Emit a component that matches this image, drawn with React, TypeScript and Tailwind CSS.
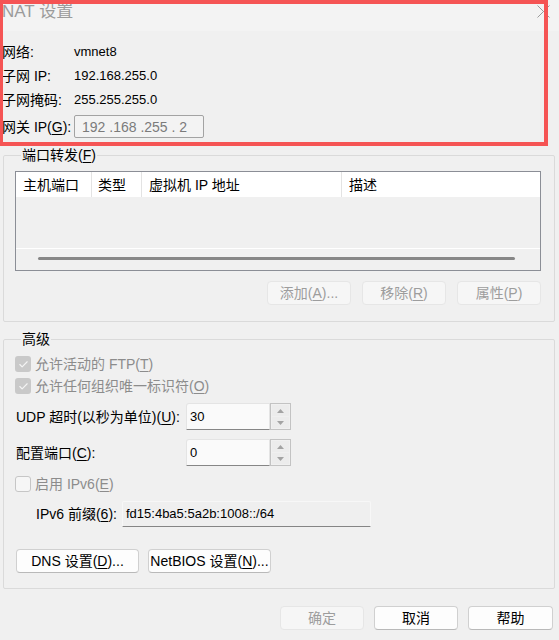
import { Check } from "lucide-react";

const font = "font-['Liberation_Sans','Noto_Sans_CJK_SC',sans-serif]";

function K({ c }: { c: string }) {
  return <span className="underline underline-offset-2">{c}</span>;
}

function CheckBox({ checked, children }: { checked?: boolean; children: React.ReactNode }) {
  return (
    <div className="flex h-4 items-center">
      {checked ? (
        <div className="flex h-4 w-4 items-center justify-center rounded-[3px] bg-[#c9c9c9]">
          <Check size={11} strokeWidth={2.5} color="#f4f4f4" />
        </div>
      ) : (
        <div className="h-4 w-4 rounded-[3px] border border-[#c6c6c6] bg-[#f6f6f6]" />
      )}
      <span className="ml-1 text-[14px] leading-4 text-[#8c8c8c]">{children}</span>
    </div>
  );
}

function Spin({ value }: { value: string }) {
  return (
    <div className="flex h-[27px]">
      <div className="flex w-[84px] items-center rounded-tl-[3px] border border-[#e4e4e4] border-b-[#868686] bg-[#fafafa] pl-[3px] text-[13px] leading-4">
        {value}
      </div>
      <div className="flex w-[21px] flex-col border border-[#c3c3c3] bg-[#f0f0f0]">
        <div className="m-px flex flex-1 items-center justify-center bg-[#ececec]">
          <svg width="7" height="4" viewBox="0 0 7 4">
            <path d="M0 4 L3.5 0 L7 4 Z" fill="#a3a3a3" />
          </svg>
        </div>
        <div className="mx-px mb-px flex flex-1 items-center justify-center bg-[#ececec]">
          <svg width="7" height="4" viewBox="0 0 7 4">
            <path d="M0 0 L3.5 4 L7 0 Z" fill="#a3a3a3" />
          </svg>
        </div>
      </div>
    </div>
  );
}

function Btn({
  children,
  disabled,
  w = "w-[84px]",
}: {
  children: React.ReactNode;
  disabled?: boolean;
  w?: string;
}) {
  return (
    <div
      className={`${w} flex h-[24px] items-center justify-center rounded-[4px] border text-[14px] leading-4 ${
        disabled
          ? "border-[#e6e6e6] bg-[#f6f6f6] text-[#9d9d9d]"
          : "border-[#d0d0d0] border-b-[#b9b9b9] bg-[#fdfdfd] text-black"
      }`}
    >
      {children}
    </div>
  );
}

function InfoRow({ label, value }: { label: React.ReactNode; value: string }) {
  return (
    <div className="flex h-6 items-center">
      <div className="w-[72px] text-[14px] leading-4">{label}</div>
      <div className="text-[13px] leading-4">{value}</div>
    </div>
  );
}

export default function App() {
  return (
    <div className={`${font} relative h-[640px] w-[559px] overflow-hidden bg-[#f0f0f0] text-black`}>
      {/* title bar */}
      <div className="flex h-[31px] items-start justify-between bg-[#f3f3f3]">
        <div className="pl-[2px] pt-[2px] text-[17px] leading-[20px] text-[#9b9b9b]">NAT 设置</div>
        <svg className="mr-[9px] mt-[5px]" width="13" height="13" viewBox="0 0 13 13">
          <path d="M0.5 0.5 L12.5 12.5 M12.5 0.5 L0.5 12.5" stroke="#9a9a9a" strokeWidth="1" />
        </svg>
      </div>

      {/* network info */}
      <div className="pl-[2px] pt-[9px]">
        <InfoRow label="网络:" value="vmnet8" />
        <InfoRow label="子网 IP:" value="192.168.255.0" />
        <InfoRow label="子网掩码:" value="255.255.255.0" />
        <div className="mt-[3px] flex h-[23px] items-center">
          <div className="w-[72px] text-[14px] leading-4">
            网关 IP(<K c="G" />):
          </div>
          <div className="flex h-[23px] w-[130px] items-center rounded-[2px] border border-[#a3a3a3] bg-[#f3f3f3] pl-[7px] text-[14px] leading-4 text-[#7b7b7b]">
            192 .168 .255 . 2
          </div>
        </div>
      </div>

      {/* port forwarding */}
      <fieldset className="ml-[3px] mt-[9px] w-[552px] rounded-[2px] border border-[#dadada] pb-[16px] pl-[11px] pr-[13px]">
        <legend className="ml-[6px] px-px text-[14px] leading-4">
          端口转发(<K c="F" />)
        </legend>
        <div className="mt-[8px] flex h-[100px] flex-col border border-[#8b8e96]">
          <div className="flex h-[25px] items-center bg-white text-[14px] leading-4">
            <div className="flex h-full w-[76px] items-center border-r border-[#e3e3e3] pl-[7px]">主机端口</div>
            <div className="flex h-full w-[50px] items-center border-r border-[#e3e3e3] pl-[6px]">类型</div>
            <div className="flex h-full w-[200px] items-center border-r border-[#e3e3e3] pl-[7px]">虚拟机 IP 地址</div>
            <div className="flex h-full flex-1 items-center pl-[7px]">描述</div>
          </div>
          <div className="h-[51px]" />
          <div className="h-px bg-white" />
          <div className="flex-1 pt-[8px]">
            <div className="ml-[22px] h-[3px] w-[477px] rounded-full bg-[#868686]" />
          </div>
        </div>
        <div className="mt-[10px] flex justify-end gap-[11px]">
          <Btn disabled>
            添加(<K c="A" />)...
          </Btn>
          <Btn disabled>
            移除(<K c="R" />)
          </Btn>
          <Btn disabled>
            属性(<K c="P" />)
          </Btn>
        </div>
      </fieldset>

      {/* advanced */}
      <fieldset className="ml-[3px] mt-[9px] w-[552px] rounded-[2px] border border-[#dadada] pb-[15px] pl-[11px]">
        <legend className="ml-[6px] px-px text-[14px] leading-4">高级</legend>
        <div className="mt-[9px]">
          <CheckBox checked>
            允许活动的 FTP(<K c="T" />)
          </CheckBox>
        </div>
        <div className="mt-[6px]">
          <CheckBox checked>
            允许任何组织唯一标识符(<K c="O" />)
          </CheckBox>
        </div>
        <div className="mt-[9px] flex items-center">
          <div className="w-[171px] pl-px text-[14px] leading-4">
            UDP 超时(以秒为单位)(<K c="U" />):
          </div>
          <Spin value="30" />
        </div>
        <div className="mt-[9px] flex items-center">
          <div className="w-[171px] pl-px text-[14px] leading-4">
            配置端口(<K c="C" />):
          </div>
          <Spin value="0" />
        </div>
        <div className="mt-[10px]">
          <CheckBox>
            启用 IPv6(<K c="E" />)
          </CheckBox>
        </div>
        <div className="mt-[9px] flex items-center">
          <div className="w-[107px] pl-[21px] text-[14px] leading-4">
            IPv6 前缀(<K c="6" />):
          </div>
          <div className="flex h-[26px] w-[249px] items-start rounded-t-[2px] border border-[#f7f7f7] border-b-[#858585] bg-[#efefef] pl-[3px] pt-[4px] text-[13px] leading-4">
            fd15:4ba5:5a2b:1008::/64
          </div>
        </div>
        <div className="mt-[22px] flex gap-[9px] pl-px">
          <Btn w="w-[123px]">
            DNS 设置(<K c="D" />)...
          </Btn>
          <Btn w="w-[123px]">
            NetBIOS 设置(<K c="N" />)...
          </Btn>
        </div>
      </fieldset>

      {/* dialog buttons */}
      <div className="mt-[17px] flex justify-end gap-[10px] pr-[6px]">
        <Btn disabled>确定</Btn>
        <Btn>取消</Btn>
        <Btn w="w-[85px]">帮助</Btn>
      </div>

      {/* highlight annotation */}
      <div className="pointer-events-none absolute left-[-1px] top-0 h-[146px] w-[549px] border-4 border-[#f55454]" />
    </div>
  );
}
